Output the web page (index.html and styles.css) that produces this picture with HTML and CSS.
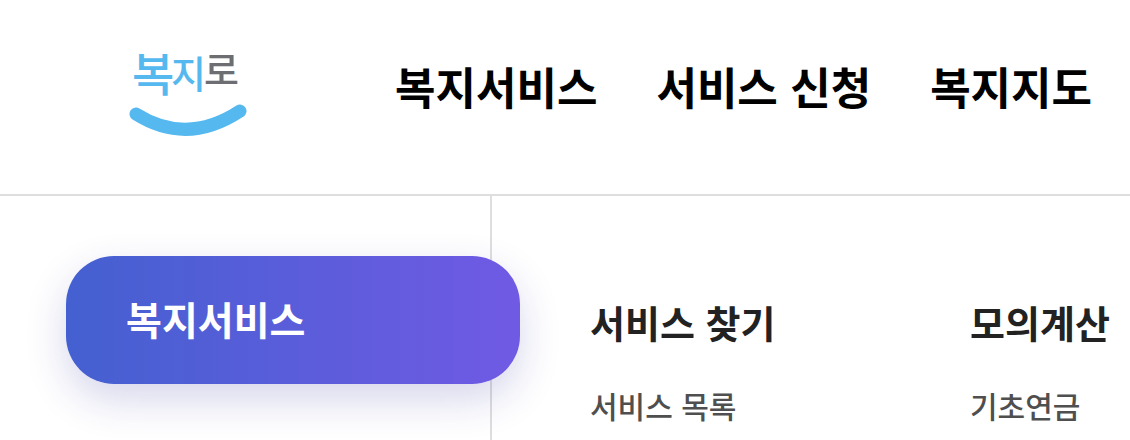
FILE: index.html
```html
<!doctype html>
<html lang="ko">

<head>
    <meta charset="UTF-8" />
    <meta name="viewport" content="width=device-width, initial-scale=1.0" />
    <title>복지로</title>
    <link rel="stylesheet" href="styles.css">
</head>

<body>
    <header class="header">
        <a class="logo" href="#" aria-label="복지로">
            <svg width="118" height="102" viewBox="0 0 118 102">
                <text class="logo-blue" x="3" y="56" font-size="46">복</text>
                <text class="logo-blue" x="42" y="53" font-size="38">지</text>
                <text class="logo-gray" x="75" y="49" font-size="38">로</text>
                <path class="logo-smile" d="M7 79 Q58 111 111 76" />
            </svg>
        </a>
        <nav class="main-nav">
            <a href="#">복지서비스</a>
            <a href="#">서비스 신청</a>
            <a href="#">복지지도</a>
        </nav>
    </header>

    <main class="mega-menu">
        <aside class="side">
            <a class="side-link" href="#">복지서비스</a>
        </aside>
        <div class="columns">
            <section class="column">
                <h2>서비스 찾기</h2>
                <ul>
                    <li><a href="#">서비스 목록</a></li>
                </ul>
            </section>
            <section class="column">
                <h2>모의계산</h2>
                <ul>
                    <li><a href="#">기초연금</a></li>
                </ul>
            </section>
        </div>
    </main>
</body>

</html>
```
FILE: styles.css
```css
:root {
    --line-color: #dedede;
    --logo-blue: #55b9ef;
    --logo-gray: #6d6e72;
}

* {
    margin: 0;
    padding: 0;
    box-sizing: border-box;
}

body {
    min-height: 100vh;
    display: flex;
    flex-direction: column;
    background-color: #fff;
    color: #222;
    font-family: "Noto Sans CJK KR", sans-serif;
}

a {
    color: inherit;
    text-decoration: none;
}

ul {
    list-style: none;
}

.header {
    display: flex;
    align-items: center;
    gap: 148px;
    padding: 35px 0 57px 129px;
    border-bottom: 2px solid var(--line-color);
}

.logo,
.logo svg {
    display: block;
    flex-shrink: 0;
}

.logo text {
    font-weight: 500;
}

.logo-blue {
    fill: var(--logo-blue);
}

.logo-gray {
    fill: var(--logo-gray);
}

.logo-smile {
    fill: none;
    stroke: var(--logo-blue);
    stroke-width: 13;
    stroke-linecap: round;
}

.main-nav {
    display: flex;
    gap: 59px;
    color: #000;
    font-size: 44px;
    font-weight: 700;
    line-height: 64px;
    white-space: nowrap;
}

.mega-menu {
    flex: 1;
    display: flex;
}

.side {
    flex: 0 0 492px;
    padding: 60px 0 0 66px;
    border-right: 2px solid var(--line-color);
}

.side-link {
    position: relative;
    display: block;
    margin-right: -30px;
    padding: 30px 60px 34px;
    border-radius: 48px;
    background: linear-gradient(90deg, #4460d0, #705ae4);
    box-shadow: 0 16px 40px rgba(50, 50, 160, 0.2);
    color: #fff;
    font-size: 39px;
    font-weight: 700;
    line-height: 64px;
}

.columns {
    flex: 1;
    display: grid;
    grid-template-columns: 380px 1fr;
    padding: 98px 0 0 98px;
    white-space: nowrap;
}

.column h2 {
    margin-bottom: 32px;
    font-size: 38px;
    font-weight: 700;
    line-height: 56px;
}

.column li {
    color: #4f4f4f;
    font-size: 30px;
    font-weight: 500;
    line-height: 46px;
}
```
